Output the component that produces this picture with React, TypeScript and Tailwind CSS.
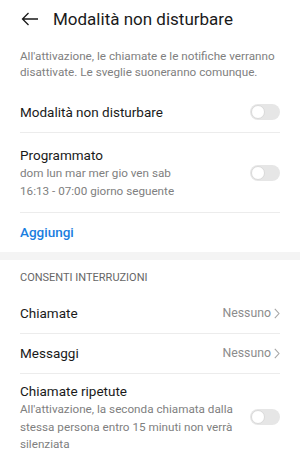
import React from "react";

function Toggle() {
  return (
    <div className="relative h-[16px] w-[30px] shrink-0 rounded-full bg-[#e6e6e6]">
      <div className="absolute left-[1px] top-[1px] h-[14px] w-[14px] rounded-full border border-[#d9d9d9] bg-white" />
    </div>
  );
}

function Chevron() {
  return (
    <svg width="6" height="11" viewBox="0 0 6 11" fill="none" className="ml-[3px]">
      <path d="M0.8 0.8 L5 5.5 L0.8 10.2" stroke="#a6a6a6" strokeWidth="1.1" />
    </svg>
  );
}

function Divider() {
  return <div className="mx-5 h-px bg-[#ececec]" />;
}

export default function App() {
  return (
    <div className="h-[453px] w-[300px] overflow-hidden bg-white font-['Roboto',sans-serif] text-[#1a1a1a]">
      {/* header */}
      <div className="flex h-[37px] items-center px-[21px]">
        <svg width="18" height="14" viewBox="0 0 18 14" fill="none">
          <path d="M17 7 H1.5 M7.5 1 L1.5 7 L7.5 13" stroke="#1a1a1a" strokeWidth="1.3" />
        </svg>
        <span className="ml-[14px] text-[17px] leading-[20px]">Modalità non disturbare</span>
      </div>

      <p className="px-5 pt-[11px] text-[11.7px] leading-[16px] text-[#808080]">
        All'attivazione, le chiamate e le notifiche verranno disattivate. Le sveglie suoneranno comunque.
      </p>

      <div className="mt-[12px] flex h-[40px] items-center justify-between px-5">
        <span className="text-[13.5px]">Modalità non disturbare</span>
        <Toggle />
      </div>
      <Divider />

      <div className="flex items-center justify-between px-5 pb-[12px] pt-[12px]">
        <div>
          <div className="text-[13.5px] leading-[20px]">Programmato</div>
          <div className="text-[11.7px] leading-[17.5px] text-[#808080]">dom lun mar mer gio ven sab</div>
          <div className="text-[11.7px] leading-[17.5px] text-[#808080]">16:13 - 07:00 giorno seguente</div>
        </div>
        <Toggle />
      </div>
      <Divider />

      <div className="flex h-[39px] items-center px-5">
        <span className="text-[13.5px] font-medium text-[#1a7ee0]">Aggiungi</span>
      </div>

      <div className="h-[8px] bg-[#f4f4f4]" />

      <div className="flex h-[33px] items-center px-5 pt-[3px]">
        <span className="text-[11px] text-[#666666]">CONSENTI INTERRUZIONI</span>
      </div>

      <div className="flex h-[40px] items-center justify-between px-5">
        <span className="text-[13.5px]">Chiamate</span>
        <div className="flex items-center text-[12.3px] text-[#8c8c8c]">
          Nessuno
          <Chevron />
        </div>
      </div>
      <Divider />

      <div className="flex h-[39px] items-center justify-between px-5">
        <span className="text-[13.5px]">Messaggi</span>
        <div className="flex items-center text-[12.3px] text-[#8c8c8c]">
          Nessuno
          <Chevron />
        </div>
      </div>
      <Divider />

      <div className="flex items-center justify-between gap-4 px-5 pt-[7px]">
        <div>
          <div className="text-[13.5px] leading-[20px]">Chiamate ripetute</div>
          <div className="text-[11.7px] leading-[17.5px] text-[#808080]">
            All'attivazione, la seconda chiamata dalla stessa persona entro 15 minuti non verrà silenziata
          </div>
        </div>
        <Toggle />
      </div>
    </div>
  );
}
